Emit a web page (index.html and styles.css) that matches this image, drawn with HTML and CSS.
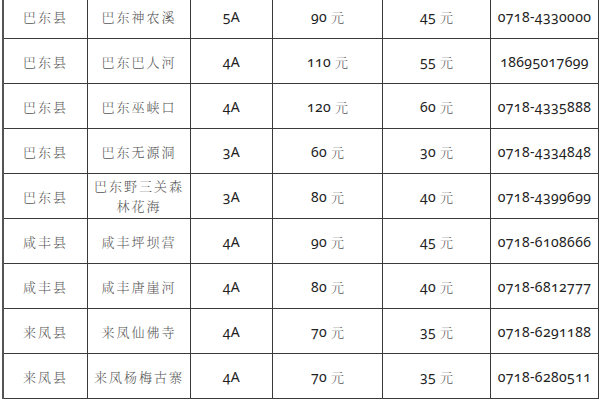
FILE: index.html
```html
<!DOCTYPE html>
<html lang="zh">
<head>
<meta charset="utf-8">
<link rel="stylesheet" href="styles.css">
</head>
<body>
<div class="table">
  <div class="c zh">巴东县</div><div class="c zh">巴东神农溪</div><div class="c num">5A</div><div class="c num">90 <span class="zh y">元</span></div><div class="c num">45 <span class="zh y">元</span></div><div class="c num">0718-4330000</div>
  <div class="c zh">巴东县</div><div class="c zh">巴东巴人河</div><div class="c num">4A</div><div class="c num">110 <span class="zh y">元</span></div><div class="c num">55 <span class="zh y">元</span></div><div class="c num">18695017699</div>
  <div class="c zh">巴东县</div><div class="c zh">巴东巫峡口</div><div class="c num">4A</div><div class="c num">120 <span class="zh y">元</span></div><div class="c num">60 <span class="zh y">元</span></div><div class="c num">0718-4335888</div>
  <div class="c zh">巴东县</div><div class="c zh">巴东无源洞</div><div class="c num">3A</div><div class="c num">60 <span class="zh y">元</span></div><div class="c num">30 <span class="zh y">元</span></div><div class="c num">0718-4334848</div>
  <div class="c zh">巴东县</div><div class="c zh two">巴东野三关森<br>林花海</div><div class="c num">3A</div><div class="c num">80 <span class="zh y">元</span></div><div class="c num">40 <span class="zh y">元</span></div><div class="c num">0718-4399699</div>
  <div class="c zh">咸丰县</div><div class="c zh">咸丰坪坝营</div><div class="c num">4A</div><div class="c num">90 <span class="zh y">元</span></div><div class="c num">45 <span class="zh y">元</span></div><div class="c num">0718-6108666</div>
  <div class="c zh">咸丰县</div><div class="c zh">咸丰唐崖河</div><div class="c num">4A</div><div class="c num">80 <span class="zh y">元</span></div><div class="c num">40 <span class="zh y">元</span></div><div class="c num">0718-6812777</div>
  <div class="c zh">来凤县</div><div class="c zh">来凤仙佛寺</div><div class="c num">4A</div><div class="c num">70 <span class="zh y">元</span></div><div class="c num">35 <span class="zh y">元</span></div><div class="c num">0718-6291188</div>
  <div class="c zh">来凤县</div><div class="c zh">来凤杨梅古寨</div><div class="c num">4A</div><div class="c num">70 <span class="zh y">元</span></div><div class="c num">35 <span class="zh y">元</span></div><div class="c num">0718-6280511</div>
</div>
</body>
</html>
```
FILE: styles.css
```css
html, body {
  margin: 0;
  padding: 0;
  background: #fff;
  overflow: hidden;
}
.table {
  display: grid;
  grid-template-columns: 84px 103px 82px 110px 108px 108px;
  grid-auto-rows: 45px;
  margin: -7px 0 0 2px;
  width: 597px;
  border-left: 2px solid #555;
  border-top: 1px solid #3a3a3a;
  box-sizing: border-box;
}
.c {
  box-sizing: border-box;
  border-right: 1px solid #3a3a3a;
  border-bottom: 1px solid #3a3a3a;
  display: flex;
  align-items: center;
  justify-content: center;
  text-align: center;
  white-space: nowrap;
}
.zh {
  font-family: "Noto Serif CJK SC", "Noto Sans CJK SC", sans-serif;
  font-size: 13px;
  letter-spacing: 2px;
  color: #555;
  font-weight: 300;
}
.two {
  line-height: 20px;
}
.num {
  font-family: "Noto Sans", "Noto Sans CJK SC", sans-serif;
  font-feature-settings: "onum" 1;
  font-size: 14px;
  color: #222;
  letter-spacing: 0.4px;
}
.y {
  margin-left: 4px;
  letter-spacing: 0;
}
```
